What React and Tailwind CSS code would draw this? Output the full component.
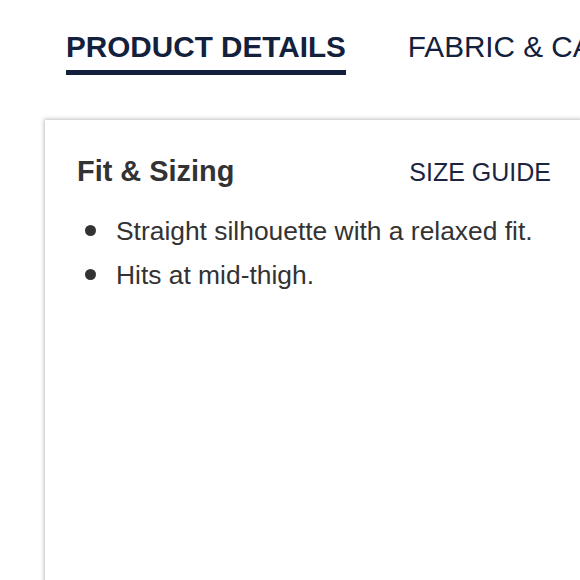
const tabs = [
  { id: 'details', label: 'PRODUCT DETAILS' },
  { id: 'care', label: 'FABRIC & CARE' },
];

const fitNotes = ['Straight silhouette with a relaxed fit.', 'Hits at mid-thigh.'];

export default function App() {
  const active = 'details';

  return (
    <div className="w-[580px] h-[580px] overflow-hidden bg-white font-['Liberation_Sans',Arial,sans-serif]">
      {/* Tabs */}
      <div className="flex gap-[62px] pl-[66px] pt-[32px] whitespace-nowrap">
        {tabs.map((tab) => (
          <div key={tab.id} className="flex flex-col">
            <span
              className={`text-[29.7px] leading-none text-[#14213d] ${
                active === tab.id ? 'font-bold' : 'font-normal'
              }`}
            >
              {tab.label}
            </span>
            <span
              className={`mt-[8.5px] h-[5px] ${active === tab.id ? 'bg-[#14213d]' : 'bg-transparent'}`}
            />
          </div>
        ))}
      </div>

      {/* Card */}
      <div className="ml-[45px] mt-[44.5px] w-[538px] h-[520px] bg-white shadow-[-1px_-1px_4px_rgba(0,0,0,0.25)] px-[32px] pt-[37px]">
        <div className="flex items-baseline justify-between">
          <h3 className="text-[28.9px] leading-none font-bold text-[#333333]">Fit &amp; Sizing</h3>
          <span className="text-[25px] leading-none text-[#1b2541]">SIZE GUIDE</span>
        </div>
        <ul className="mt-[23px] ml-[8px]">
          {fitNotes.map((note) => (
            <li key={note} className="flex items-center gap-[20px] text-[26.4px] leading-[44px] text-[#333333]">
              <span className="w-[11px] h-[11px] rounded-full bg-[#333333] shrink-0" />
              {note}
            </li>
          ))}
        </ul>
      </div>
    </div>
  );
}
